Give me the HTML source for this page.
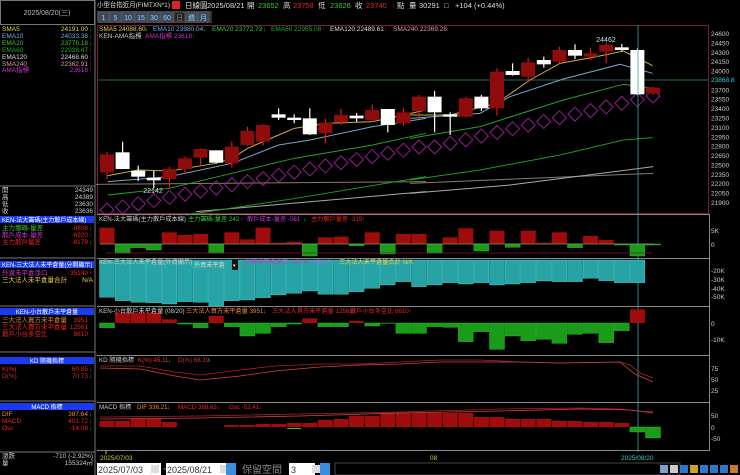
<!DOCTYPE html>
<html><head><meta charset="utf-8">
<style>
body{margin:0;background:#000;width:740px;height:475px;overflow:hidden;font-family:"Liberation Sans","Noto Sans CJK TC",sans-serif;}
svg{position:absolute;left:0;top:0}
text{font-family:"Liberation Sans","Noto Sans CJK TC",sans-serif;}
.m{font-family:"Liberation Mono","Noto Sans CJK TC",monospace;}
</style></head><body>
<svg id="s" width="740" height="475" viewBox="0 0 740 475" xmlns="http://www.w3.org/2000/svg">
<rect width="740" height="475" fill="#000"/>
<rect x="0.5" y="0.5" width="94" height="24" fill="#000" stroke="#777"/>
<text x="47" y="15" font-size="7" fill="#bbb" text-anchor="middle">2025/08/20(三)</text>
<line x1="95" y1="0" x2="95" y2="475" stroke="#777"/>
<g font-size="6.5" class="m">
<text x="2" y="31" fill="#e8d24a">SMA5</text><text x="88" y="31" fill="#e8d24a" text-anchor="end">24191.00</text><text x="89" y="31" fill="#2c2" font-size="6">↓</text>
<text x="2" y="38" fill="#6ab0e8">EMA10</text><text x="88" y="38" fill="#6ab0e8" text-anchor="end">24033.38</text><text x="89" y="38" fill="#2c2" font-size="6">↓</text>
<text x="2" y="45" fill="#3c3">EMA20</text><text x="88" y="45" fill="#3c3" text-anchor="end">23776.18</text><text x="89" y="45" fill="#2c2" font-size="6">↓</text>
<text x="2" y="52" fill="#2a2">EMA60</text><text x="88" y="52" fill="#2a2" text-anchor="end">22928.47</text><text x="89" y="52" fill="#e22" font-size="6">↑</text>
<text x="2" y="59" fill="#ddd">EMA120</text><text x="88" y="59" fill="#ddd" text-anchor="end">22468.60</text><text x="89" y="59" fill="#e22" font-size="6">↑</text>
<text x="2" y="66" fill="#d9a">SMA240</text><text x="88" y="66" fill="#d9a" text-anchor="end">22362.91</text><text x="89" y="66" fill="#e22" font-size="6">↑</text>
<text x="2" y="72" fill="#c3c">AMA指標</text><text x="88" y="72" fill="#c3c" text-anchor="end">23618</text><text x="89" y="72" fill="#e22" font-size="6">↑</text>
<line x1="0" y1="186" x2="95" y2="186" stroke="#777"/>
<text x="2" y="192" fill="#ccc">開</text><text x="93" y="192" fill="#ccc" text-anchor="end">24349</text>
<text x="2" y="199" fill="#ccc">高</text><text x="93" y="199" fill="#ccc" text-anchor="end">24389</text>
<text x="2" y="206" fill="#ccc">低</text><text x="93" y="206" fill="#ccc" text-anchor="end">23630</text>
<text x="2" y="213" fill="#ccc">收</text><text x="93" y="213" fill="#ccc" text-anchor="end">23636</text>
<rect x="0" y="216" width="94" height="7" fill="#1a3cf0"/><text x="2" y="222" fill="#fff" font-size="6">KEN-法大籌碼(主力散戶成本線)</text>
<text x="2" y="230" fill="#3c3">主力籌碼-量差</text><text x="88" y="230" fill="#e22" text-anchor="end">-8808</text><text x="89" y="230" fill="#2c2" font-size="6">↓</text>
<text x="2" y="237" fill="#c3c">散戶成本-量差</text><text x="88" y="237" fill="#e22" text-anchor="end">-6920</text><text x="89" y="237" fill="#e22" font-size="6">↑</text>
<text x="2" y="244" fill="#e22">主力散戶量差</text><text x="88" y="244" fill="#e22" text-anchor="end">-8179</text><text x="89" y="244" fill="#2c2" font-size="6">↓</text>
<line x1="0" y1="258" x2="95" y2="258" stroke="#777"/>
<rect x="0" y="261" width="94" height="7" fill="#1a3cf0"/><text x="2" y="267" fill="#fff" font-size="6">KEN-三大法人未平倉量(分開顯示)</text>
<text x="2" y="275" fill="#c3c">外資未平倉淨口</text><text x="88" y="275" fill="#e22" text-anchor="end">-35140</text><text x="89" y="275" fill="#e22" font-size="6">↑</text>
<text x="2" y="282" fill="#e8d24a">三大法人未平倉量合計</text><text x="93" y="282" fill="#e8d24a" text-anchor="end">N/A</text>
<line x1="0" y1="306" x2="95" y2="306" stroke="#777"/>
<rect x="0" y="308" width="94" height="7" fill="#1a3cf0"/><text x="47" y="314" fill="#fff" font-size="6" text-anchor="middle">KEN-小台散戶未平倉量</text>
<text x="2" y="322" fill="#e83">三大法人買方未平倉量</text><text x="88" y="322" fill="#e22" text-anchor="end">3951</text>
<text x="2" y="329" fill="#e22">三大法人賣方未平倉量</text><text x="88" y="329" fill="#e22" text-anchor="end">12561</text>
<text x="2" y="336" fill="#e22">散戶小台多空比</text><text x="88" y="336" fill="#e22" text-anchor="end">8610</text>
<line x1="0" y1="352" x2="95" y2="352" stroke="#777"/>
<rect x="0" y="357" width="94" height="7" fill="#1a3cf0"/><text x="47" y="363" fill="#fff" font-size="6" text-anchor="middle">KD 隨機指標</text>
<text x="2" y="371" fill="#e22">K(%)</text><text x="88" y="371" fill="#e22" text-anchor="end">60.85</text><text x="89" y="371" fill="#2c2" font-size="6">↓</text>
<text x="2" y="378" fill="#b33">D(%)</text><text x="88" y="378" fill="#b33" text-anchor="end">70.73</text><text x="89" y="378" fill="#2c2" font-size="6">↓</text>
<line x1="0" y1="401" x2="95" y2="401" stroke="#777"/>
<rect x="0" y="403" width="94" height="7" fill="#1a3cf0"/><text x="47" y="409" fill="#fff" font-size="6" text-anchor="middle">MACD 指標</text>
<text x="2" y="416" fill="#e83">DIF</text><text x="88" y="416" fill="#e83" text-anchor="end">387.64</text><text x="89" y="416" fill="#2c2" font-size="6">↓</text>
<text x="2" y="423" fill="#e22">MACD</text><text x="88" y="423" fill="#e22" text-anchor="end">401.72</text><text x="89" y="423" fill="#2c2" font-size="6">↓</text>
<text x="2" y="430" fill="#e22">Osc</text><text x="88" y="430" fill="#e22" text-anchor="end">-14.08</text><text x="89" y="430" fill="#2c2" font-size="6">↓</text>
<line x1="0" y1="452" x2="95" y2="452" stroke="#777"/>
<text x="2" y="458" fill="#ccc">漲跌</text><text x="93" y="458" fill="#ccc" text-anchor="end">-710 (-2.92%)</text>
<text x="2" y="465" fill="#ccc">量</text><text x="93" y="465" fill="#ccc" text-anchor="end">155324㎡</text>
</g>
<!-- header -->
<g font-size="7.5">
<text x="97" y="7" fill="#ddd" font-size="6.8" textLength="73" lengthAdjust="spacingAndGlyphs">小型台指近月(FIMTXN*1)</text>
<rect x="172" y="1" width="8" height="8" fill="#d22"/>
<text x="185" y="8" fill="#ddd">日線圖</text>
<text x="207" y="8" fill="#ddd">2025/08/21</text>
<text x="247" y="8" fill="#ddd">開</text><text x="258" y="8" fill="#3c3">23652</text>
<text x="283" y="8" fill="#ddd">高</text><text x="293" y="8" fill="#e22">23758</text>
<text x="318" y="8" fill="#ddd">低</text><text x="330" y="8" fill="#3c3">23626</text>
<text x="355" y="8" fill="#ddd">收</text><text x="366" y="8" fill="#e22">23740</text>
<text x="370" y="8" fill="#e22" font-size="6" dx="22">↑</text>
<text x="397" y="8" fill="#ddd">點</text><text x="409" y="8" fill="#ddd">量</text>
<text x="419" y="8" fill="#ddd">30291</text><text x="444" y="8" fill="#ddd">□</text>
<text x="455" y="8" fill="#ddd">+104 (+0.44%)</text>
</g>
<g font-size="7" fill="#9cf">
<rect x="97" y="11" width="115" height="12" fill="#333"/>
<g id="btn"></g>
</g>
<rect x="97.5" y="25.5" width="611" height="188" fill="none" stroke="#7a1c3a"/>
<g font-size="6.5">
<text x="99" y="31" fill="#e8d24a">SMA5 24088.60</text><text x="145" y="31" fill="#2c2">↓</text>
<text x="153" y="31" fill="#6ab0e8">EMA10 23980.04</text><text x="203" y="31" fill="#2c2">↓</text>
<text x="212" y="31" fill="#3c3">EMA20 23772.73</text><text x="263" y="31" fill="#2c2">↓</text>
<text x="271" y="31" fill="#2a2">EMA60 22955.08</text><text x="322" y="31" fill="#e22">↑</text>
<text x="330" y="31" fill="#ddd">EMA120 22489.61</text><text x="384" y="31" fill="#e22">↑</text>
<text x="393" y="31" fill="#d9a">SMA240 22369.28</text><text x="446" y="31" fill="#e22">↑</text>
<text x="99" y="38" fill="#ccc">KEN-AMA指標</text><text x="145" y="38" fill="#c3c">AMA指標 23618</text><text x="192" y="38" fill="#e22">↑</text>
</g>
<line x1="98" y1="80" x2="708" y2="80" stroke="#2a8c8c" stroke-width="0.8"/>
<g transform="translate(96,25) scale(0.3333)" fill="none" stroke-width="3">
<polyline stroke="#8a7a6a" points="0,478 990,470"/>
<polyline stroke="#aaa" points="300,560 990,500"/>
<polyline stroke="#1c9c1c" points="270,570 600,520 990,455"/>
<polyline stroke="#2aa02a" points="35,510 220,490 408,445 595,400 830,360 990,325"/>
<polyline stroke="#7aa6c8" points="35,470 220,455 408,415 548,360 642,345 830,305 990,280"/>
<polyline stroke="#c8b040" points="35,452 127,435 220,438 360,415 408,400 455,370 548,330 595,310 690,295 830,290 922,270 990,255"/>
</g>
<g transform="translate(410,25) scale(0.3333)" fill="none" stroke-width="3">
<polyline stroke="#8a7a6a" points="0,475 730,445"/>
<polyline stroke="#aaa" points="0,505 300,480 730,425"/>
<polyline stroke="#1c9c1c" points="0,465 210,435 450,390 640,345 728,338"/>
<polyline stroke="#2aa02a" points="0,340 210,305 460,225 640,178 728,190"/>
<polyline stroke="#7aa6c8" points="0,280 210,265 300,215 460,162 630,118 728,145"/>
<polyline stroke="#c8b040" points="0,270 120,270 260,235 360,165 450,115 560,95 640,78 728,122"/>
</g>
<g id="dia" fill="none" stroke="#a020a0" stroke-width="0.9"></g>
<g id="cand"></g>
<line x1="638" y1="25" x2="638" y2="452" stroke="#3aa" stroke-width="0.8"/>
<text x="153" y="193" font-size="7" fill="#ddd" text-anchor="middle">22142</text>
<text x="606" y="42" font-size="7" fill="#ddd" text-anchor="middle">24462</text>
<g id="pax" font-size="6.5" fill="#ccc"></g>
<rect x="709" y="76" width="31" height="8" fill="#000"/>
<text x="711" y="82" font-size="6.5" fill="#3cc">23868.8</text>
<g stroke="#888"><line x1="97" y1="214.5" x2="709" y2="214.5"/><line x1="97" y1="258.5" x2="709" y2="258.5"/><line x1="97" y1="306.5" x2="709" y2="306.5"/><line x1="97" y1="355.5" x2="709" y2="355.5"/><line x1="97" y1="402.5" x2="709" y2="402.5"/><line x1="97" y1="450.5" x2="709" y2="450.5"/><line x1="709.5" y1="214" x2="709.5" y2="451"/></g>
<g id="bars"></g>
<line x1="100" y1="244" x2="655" y2="244" stroke="#8a9a5a" stroke-width="0.8"/>
<line x1="106" y1="253" x2="652" y2="253" stroke="#7a1c3a" stroke-width="0.8"/>
<g font-size="6.2">
<text x="99" y="221" fill="#ccc">KEN-法大籌碼(主力散戶成本線)</text><text x="188" y="221" fill="#3c3">主力籌碼-量差 242</text><text x="240" y="221" fill="#e22">↑</text>
<text x="247" y="221" fill="#c3c">散戶成本-量差 -561</text><text x="303" y="221" fill="#2c2">↓</text><text x="311" y="221" fill="#e22">主力散戶量差 -319↑</text>
<text x="99" y="264" fill="#ccc">KEN-三大法人未平倉量(外資顯示)</text>
<rect x="192" y="260" width="38" height="10" fill="#2aa6a8"/><text x="194" y="267" fill="#ddd">外資未平倉</text>
<rect x="232" y="260" width="6" height="10" fill="#111"/><text x="233" y="267" fill="#fff" font-size="5">▾</text>
<text x="245" y="264" fill="#c3c">外資未平倉淨口 -35140</text><text x="306" y="264" fill="#2c2">↓</text><text x="311" y="264" fill="#a6f">-35140</text><text x="339" y="264" fill="#e8d24a">三大法人未平倉量合計 N/A</text>
<text x="99" y="313" fill="#ccc">KEN-小台散戶未平倉量 (08/20)</text><text x="186" y="313" fill="#e83">三大法人買方未平倉量 3951</text><text x="263" y="313" fill="#2c2">↓</text>
<text x="272" y="313" fill="#e22">三大法人賣方未平倉量 12561↑</text><text x="350" y="313" fill="#e22">散戶小台多空比 8610↑</text>
<text x="99" y="362" fill="#ccc">KD 隨機指標</text><text x="138" y="362" fill="#e33">K(%) 45.11</text><text x="168" y="362" fill="#2c2">↓</text><text x="178" y="362" fill="#c33">D(%) 68.19</text><text x="208" y="362" fill="#2c2">↓</text>
<text x="99" y="409" fill="#ccc">MACD 指標</text><text x="137" y="409" fill="#e83">DIF 336.21</text><text x="167" y="409" fill="#2c2">↓</text><text x="178" y="409" fill="#e22">MACD 388.63↓</text><text x="229" y="409" fill="#e22">Osc -52.41↓</text>
</g>
<g font-size="6.5" fill="#ccc">
<text x="711" y="233">5K</text><text x="711" y="247">0</text>
<text x="711" y="273">-20K</text><text x="711" y="282">-30K</text><text x="711" y="291">-40K</text><text x="711" y="299">-50K</text>
<text x="711" y="326">0</text><text x="711" y="342">-10K</text>
<text x="711" y="371">75</text><text x="711" y="382">50</text><text x="711" y="393">25</text>
<text x="711" y="418">50</text><text x="711" y="430">0</text><text x="711" y="441">-50</text>
</g>
<polyline fill="none" stroke="#b02020" stroke-width="0.8" points="100,366 140,366 175,372 200,375 240,370 275,366 320,364 360,364 400,362 440,360 480,360 520,362 560,363 620,362 630,365 640,373 653,378"/>
<polyline fill="none" stroke="#c44" stroke-width="0.8" points="100,368 140,369 175,376 200,380 240,376 275,371 320,367 360,365 400,364 440,362 480,362 520,362 560,363 620,362 635,374 653,382"/>
<polyline fill="none" stroke="#b02020" stroke-width="0.8" points="100,417 200,416 300,414 400,412 500,409 580,408 620,409 640,411 653,412"/>
<polyline fill="none" stroke="#c44" stroke-width="0.8" points="100,419 200,418 300,416 400,413 500,411 580,409 630,410 653,413"/>
<g font-size="6.5"><text x="100" y="460" fill="#cc3">2025/07/03</text><text x="430" y="460" fill="#cc3">08</text><text x="621" y="460" fill="#3cc">2025/08/20</text><line x1="106" y1="451" x2="106" y2="454" stroke="#cc3"/></g>
<rect x="96" y="463" width="644" height="12" fill="#000"/>
<rect x="97" y="463" width="64" height="12" fill="#fff"/><text x="98" y="473" font-size="9" fill="#333" font-family="Liberation Serif">2025/07/03</text><rect x="151" y="465" width="8" height="8" fill="#ddd"/>
<text x="163" y="472" font-size="8" fill="#ccc">~</text>
<rect x="166" y="463" width="64" height="12" fill="#fff"/><text x="167" y="473" font-size="9" fill="#333" font-family="Liberation Serif">2025/08/21</text><rect x="220" y="465" width="8" height="8" fill="#ddd"/>
<rect x="226" y="463" width="10" height="12" fill="#3a8ee0"/>
<text x="242" y="473" font-size="10" fill="#888" font-family="Liberation Serif,Noto Serif CJK SC">保留空間</text>
<rect x="289" y="463" width="26" height="12" fill="#fff"/><text x="291" y="473" font-size="9" fill="#333">3</text><rect x="312" y="465" width="8" height="8" fill="#ddd"/>
<rect x="320" y="463" width="10" height="12" fill="#3a8ee0"/>
<rect x="335" y="463" width="345" height="12" fill="#000" stroke="#444"/>
<g id="tb"></g>
</svg>
<script>
const NS="http://www.w3.org/2000/svg";
function el(p,t,a){const e=document.createElementNS(NS,t);for(const k in a)e.setAttribute(k,a[k]);p.appendChild(e);return e;}
const s=id=>document.getElementById(id);
const bl=["1","5","10","15","30","60","日","週","月"];let bx=98;
bl.forEach((b,i)=>{const w=b.length>1?12:11;el(s("btn"),"rect",{x:bx,y:12,width:w,height:10,fill:i==6?"#222":"#3a4a5a",stroke:"#555"});const t=el(s("btn"),"text",{x:bx+w/2,y:20,"text-anchor":"middle",fill:i==6?"#888":"#9cf"});t.textContent=b;bx+=w+1;});
for(let p=24600;p>=21900;p-=150){const y=34+(24600-p)*0.0626;const t=el(s("pax"),"text",{x:711,y:y+2});t.textContent=p;}
const X=i=>107+15.6*i;
const C=[["r",388,442,380,462],["w",382,432,350,432],["w",437,455,422,468],["w",458,466,438,490],["r",432,462,425,490],["r",400,432,395,445],["r",372,398,370,425],["w",376,413,376,415],["r",365,415,350,428],["r",318,360,305,362],["r",300,350,298,362],["w",268,278,250,285],["w",278,285,268,295],["w",280,328,250,330],["r",293,325,282,355],["r",270,292,252,300],["w",272,280,264,290],["r",255,285,238,292],["w",252,300,252,322],["r",262,295,248,302],["r",215,258,210,282],
["w",215,262,198,322],["w",268,275,262,330],["r",220,275,215,278],["w",215,250,210,258],["r",140,250,130,272],["w",138,150,115,152],["r",112,155,98,172],["w",105,118,95,128],["r",75,110,65,115],["w",75,92,58,102],["r",85,95,68,105],["r",60,80,55,115],["w",67,75,57,80],["w",75,208,70,210],["r",188,205,185,210]];
C.forEach((c,i)=>{const x=X(i);const y=v=>25+v/3;const col=c[0]=="r"?"#8e0c0c":"#fff";const wc=c[0]=="r"?"#e01818":"#fff";
el(s("cand"),"line",{x1:x,y1:y(c[3]),x2:x,y2:y(c[4]),stroke:wc,"stroke-width":1.2});
el(s("cand"),"rect",{x:x-7,y:y(c[1]),width:14,height:Math.max(1.5,(c[2]-c[1])/3),fill:col});});
for(let i=0;i<36;i++){const x=X(i);let y;if(i<21)y=210-(63*i/20);else y=147-(51*(i-21)/14);
el(s("dia"),"polygon",{points:`${x-7},${y} ${x},${y-7} ${x+7},${y} ${x},${y+7}`});}
const b=s("bars");
const P1=[["r",53],["g",130],["g",113],["g",120],["r",67],["r",75],["r",72],["g",130],["r",67],["r",88],["r",53],["r",98],["r",95],["g",138],["r",82],["r",80],["g",107],["r",67],["g",132],["r",72],["r",72],["g",130],["r",82],["r",55],["g",123],["r",62],["g",112],["r",62],["r",98],["r",67],["g",113],["r",78],["r",90],["g",105],["g",138],["g",105]];
P1.forEach((v,i)=>{const x=X(i)-7.5,y=210+v[1]/3,z=244;if(v[0]=="r")el(b,"rect",{x,y,width:15,height:z-y,fill:"#a00c0c"});else el(b,"rect",{x,y:z,width:15,height:y-z,fill:"#1a9c1a",stroke:"#2c2","stroke-width":0.4});});
const P2=[262,272,277,278,282,275,277,287,272,270,263,255,250,243,253,253,245,235,225,215,230,225,218,222,218,225,222,218,213,215,215,205,212,218,218];
P2.forEach((v,i)=>{const x=X(i)-7.5;const bot=210+v/3;el(b,"rect",{x,y:260,width:15,height:bot-260,fill:"#27a3a6",stroke:"#6ff","stroke-width":0.3});});
const P3=[["g",353],["r",308],["r",308],["r",308],["r",328],["g",342],["g",353],["r",318],["g",350],["g",378],["g",370],["g",350],["g",342],["r",325],["g",350],["g",350],["r",333],["g",348],["g",340],["g",370],["g",370],["g",350],["g",352],["g",395],["g",365],["g",418],["g",378],["g",392],["g",388],["g",400],["g",373],["g",370],["g",398],["g",362],["r",298]];
P3.forEach((v,i)=>{const x=X(i)-7.5,y=210+v[1]/3,z=323;if(v[0]=="r")el(b,"rect",{x,y,width:15,height:z-y,fill:"#a00c0c"});else el(b,"rect",{x,y:z,width:15,height:y-z,fill:"#1a9c1a",stroke:"#2c2","stroke-width":0.4});});
const M=[421,421,419,419,422,427,428,428,425,425,424,424,423,423,420,419,416,416,413,413,413,413,413,413,417,417,419,419,419,421,421,422,422,423,432,438];
M.forEach((y,i)=>{const x=X(i)-7.5,z=427;if(i<34){if(y<z)el(b,"rect",{x,y,width:15,height:z-y,fill:"#a00c0c"});}else el(b,"rect",{x,y:z,width:15,height:y-z,fill:"#1a9c1a",stroke:"#2c2","stroke-width":0.4});});
el(b,"line",{x1:X(12)-7,y1:428.5,x2:X(12)+7,y2:428.5,stroke:"#2c2"});
const cols=["#9cf","#fff","#39f","#fc3","#39f","#39f","#39f","#f93"];cols.forEach((c,i)=>el(s("tb"),"rect",{x:660+i*10,y:465,width:8,height:8,fill:c,opacity:0.8}));
</script>
</body></html>
